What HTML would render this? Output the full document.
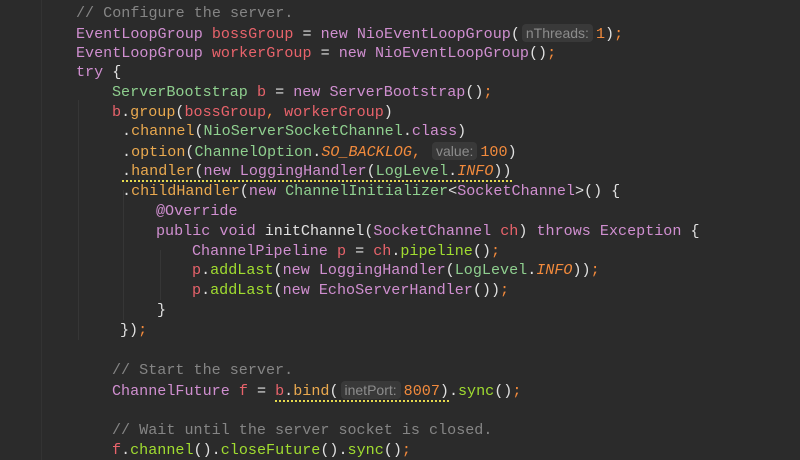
<!DOCTYPE html>
<html><head><meta charset="utf-8"><style>
html,body{margin:0;padding:0;}
body{width:800px;height:460px;background:#2b2b2b;overflow:hidden;position:relative;font-family:"Liberation Mono","DejaVu Sans Mono",monospace;font-size:15.1px;}
.l{position:absolute;white-space:pre;line-height:20px;color:#dcdcdc;}
.c{color:#858585}.t{color:#d08fd0}.v{color:#e8636b}.k{color:#d08fd0}.g{color:#8fcf8f}.m{color:#eaa94f}.n{color:#f28a3c}.s{color:#f28a3c}.b{color:#a0dc30}.p{color:#e0e0e0}
.i{font-style:italic;color:#f28a3c}
.h{font-family:"Liberation Sans",sans-serif;font-size:14px;color:#8c8c8c;background:#393939;border-radius:4px;padding:1px 4px;margin:0 3px 0 2px;}
.u{border-bottom:2px dotted #e5d94f;}
.vl{position:absolute;width:1px;background:#333;}
</style></head><body>
<div class="vl" style="left:41px;top:0;height:460px"></div>
<div class="vl" style="left:78px;top:100px;height:240px;background:#363636"></div>
<div class="vl" style="left:123px;top:190px;height:130px;background:#363636"></div>
<div class="vl" style="left:160px;top:250px;height:50px;background:#363636"></div>
<div class="l" style="left:76px;top:3px"><span class="c">// Configure the server.</span></div>
<div class="l" style="left:76px;top:23px"><span class="t">EventLoopGroup</span> <span class="v">bossGroup</span> <span class="p">=</span> <span class="k">new</span> <span class="t">NioEventLoopGroup</span><span class="p">(</span><span class="h">nThreads:</span><span class="n">1</span><span class="p">)</span><span class="s">;</span></div>
<div class="l" style="left:76px;top:43px"><span class="t">EventLoopGroup</span> <span class="v">workerGroup</span> <span class="p">=</span> <span class="k">new</span> <span class="t">NioEventLoopGroup</span><span class="p">()</span><span class="s">;</span></div>
<div class="l" style="left:76px;top:62px"><span class="k">try</span> <span class="p">{</span></div>
<div class="l" style="left:112px;top:82px"><span class="g">ServerBootstrap</span> <span class="v">b</span> <span class="p">=</span> <span class="k">new</span> <span class="t">ServerBootstrap</span><span class="p">()</span><span class="s">;</span></div>
<div class="l" style="left:112px;top:102px"><span class="v">b</span><span class="p">.</span><span class="m">group</span><span class="p">(</span><span class="v">bossGroup</span><span class="s">,</span> <span class="v">workerGroup</span><span class="p">)</span></div>
<div class="l" style="left:122px;top:121px"><span class="p">.</span><span class="m">channel</span><span class="p">(</span><span class="g">NioServerSocketChannel</span><span class="p">.</span><span class="k">class</span><span class="p">)</span></div>
<div class="l" style="left:122px;top:141px"><span class="p">.</span><span class="m">option</span><span class="p">(</span><span class="g">ChannelOption</span><span class="p">.</span><span class="i">SO_BACKLOG</span><span class="s">,</span> <span class="h">value:</span><span class="n">100</span><span class="p">)</span></div>
<div class="l" style="left:122px;top:161px"><span class="u"><span class="p">.</span><span class="m">handler</span><span class="p">(</span><span class="k">new</span> <span class="t">LoggingHandler</span><span class="p">(</span><span class="g">LogLevel</span><span class="p">.</span><span class="i">INFO</span><span class="p">))</span></span></div>
<div class="l" style="left:122px;top:181px"><span class="p">.</span><span class="m">childHandler</span><span class="p">(</span><span class="k">new</span> <span class="g">ChannelInitializer</span><span class="p">&lt;</span><span class="t">SocketChannel</span><span class="p">&gt;() {</span></div>
<div class="l" style="left:156px;top:201px"><span class="t">@Override</span></div>
<div class="l" style="left:156px;top:221px"><span class="k">public void</span> <span class="p">initChannel(</span><span class="t">SocketChannel</span> <span class="v">ch</span><span class="p">)</span> <span class="k">throws</span> <span class="t">Exception</span> <span class="p">{</span></div>
<div class="l" style="left:192px;top:241px"><span class="t">ChannelPipeline</span> <span class="v">p</span> <span class="p">=</span> <span class="v">ch</span><span class="p">.</span><span class="b">pipeline</span><span class="p">()</span><span class="s">;</span></div>
<div class="l" style="left:192px;top:260px"><span class="v">p</span><span class="p">.</span><span class="b">addLast</span><span class="p">(</span><span class="k">new</span> <span class="t">LoggingHandler</span><span class="p">(</span><span class="g">LogLevel</span><span class="p">.</span><span class="i">INFO</span><span class="p">))</span><span class="s">;</span></div>
<div class="l" style="left:192px;top:280px"><span class="v">p</span><span class="p">.</span><span class="b">addLast</span><span class="p">(</span><span class="k">new</span> <span class="t">EchoServerHandler</span><span class="p">())</span><span class="s">;</span></div>
<div class="l" style="left:157px;top:300px"><span class="p">}</span></div>
<div class="l" style="left:120px;top:320px"><span class="p">})</span><span class="s">;</span></div>
<div class="l" style="left:112px;top:360px"><span class="c">// Start the server.</span></div>
<div class="l" style="left:112px;top:380px"><span class="t">ChannelFuture</span> <span class="v">f</span> <span class="p">=</span> <span class="u"><span class="v">b</span><span class="p">.</span><span class="m">bind</span><span class="p">(</span><span class="h">inetPort:</span><span class="n">8007</span><span class="p">)</span></span><span class="p">.</span><span class="b">sync</span><span class="p">()</span><span class="s">;</span></div>
<div class="l" style="left:112px;top:420px"><span class="c">// Wait until the server socket is closed.</span></div>
<div class="l" style="left:112px;top:440px"><span class="v">f</span><span class="p">.</span><span class="b">channel</span><span class="p">().</span><span class="b">closeFuture</span><span class="p">().</span><span class="b">sync</span><span class="p">()</span><span class="s">;</span></div>
</body></html>
